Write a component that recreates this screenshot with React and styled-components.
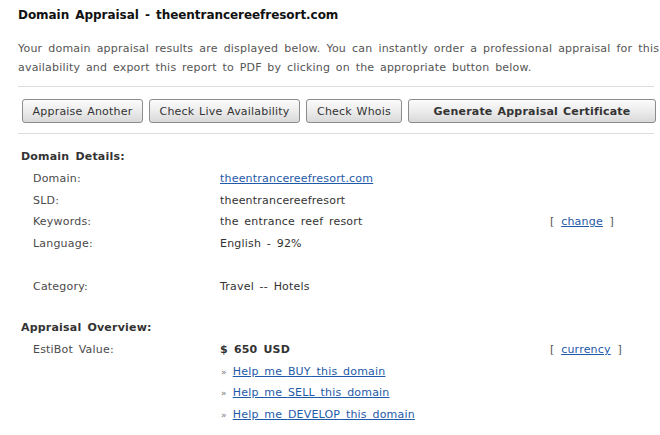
import React from 'react'
import styled, { createGlobalStyle } from 'styled-components'

const Global = createGlobalStyle`
  html, body {
    margin: 0;
    padding: 0;
    background: #fff;
  }
  body {
    width: 660px;
    overflow: hidden;
    font-family: "DejaVu Sans", Verdana, sans-serif;
    font-size: 11px;
    letter-spacing: 0.2px;
    word-spacing: 2px;
    color: #4a4a4a;
  }
`

const Page = styled.div`
  padding: 8px 0 0 18px;
  width: 642px;
`

const Title = styled.h1`
  margin: 0;
  font-size: 12px;
  line-height: 15px;
  font-weight: bold;
  letter-spacing: -0.05px;
  color: #111;
`

const Intro = styled.p`
  margin: 16px 0 0;
  line-height: 19px;
  color: #555;
  white-space: nowrap;
`

const IntroLine = styled.span`
  display: block;
  word-spacing: ${p => p.$ws || '2px'};
`

const Divider = styled.hr`
  border: 0;
  height: 1px;
  background: #dcdcdc;
  width: 636px;
  margin: ${p => p.$m};
`

const Toolbar = styled.div`
  display: flex;
  gap: 6px;
  padding-left: 4px;
`

const Button = styled.button`
  width: ${p => p.$w}px;
  height: 24px;
  padding: 0;
  border: 1px solid #8c8c8c;
  border-radius: 3px;
  background: linear-gradient(#fbfbfb 0%, #ececec 50%, #d9d9d9 100%);
  font-family: inherit;
  font-size: 11px;
  letter-spacing: 0.2px;
  word-spacing: 1px;
  font-weight: ${p => (p.$bold ? 'bold' : 'normal')};
  color: #333;
  cursor: pointer;
`

const Section = styled.div`
  padding-left: 3px;
  margin-top: ${p => p.$top}px;
`

const Heading = styled.div`
  font-weight: bold;
  line-height: 22px;
  color: #333;
`

const Grid = styled.div`
  display: grid;
  grid-template-columns: 187px 330px auto;
  padding-left: 12px;
  grid-auto-rows: 21.5px;
  align-items: center;
`

const Label = styled.div`
  grid-column: 1;
  color: #4a4a4a;
`

const Value = styled.div`
  grid-column: 2;
  color: #333;
  font-weight: ${p => (p.$bold ? 'bold' : 'normal')};
`

const Extra = styled.div`
  grid-column: 3;
  color: #555;
  word-spacing: 3px;
`

const Spacer = styled.div`
  grid-column: 1 / -1;
`

const Link = styled.a`
  color: #1e5aa8;
  text-decoration: underline;
  cursor: pointer;
`

const Bullet = styled.span`
  color: #777;
  font-size: 9px;
  margin: 0 6px 0 1px;
  word-spacing: 0;
`

const rows = [
  ['Domain:', <Link>theentrancereefresort.com</Link>],
  ['SLD:', 'theentrancereefresort'],
  ['Keywords:', 'the entrance reef resort', 'change'],
  ['Language:', 'English - 92%'],
  null,
  ['Category:', 'Travel -- Hotels'],
]

const helps = ['BUY', 'SELL', 'DEVELOP']

export default function App() {
  return (
    <>
      <Global />
      <Page>
        <Title>Domain Appraisal - theentrancereefresort.com</Title>
        <Intro>
          <IntroLine $ws="2.3px">
            Your domain appraisal results are displayed below. You can instantly order a professional appraisal for this
          </IntroLine>
          <IntroLine>
            availability and export this report to PDF by clicking on the appropriate button below.
          </IntroLine>
        </Intro>
        <Divider $m="9px 0 12px" />
        <Toolbar>
          <Button $w={121}>Appraise Another</Button>
          <Button $w={151}>Check Live Availability</Button>
          <Button $w={96}>Check Whois</Button>
          <Button $w={248} $bold>Generate Appraisal Certificate</Button>
        </Toolbar>
        <Divider $m="10px 0 0" />

        <Section $top={12}>
          <Heading>Domain Details:</Heading>
          <Grid>
            {rows.map((r, i) =>
              r === null ? (
                <Spacer key={i} />
              ) : (
                <React.Fragment key={i}>
                  <Label>{r[0]}</Label>
                  <Value>{r[1]}</Value>
                  {r[2] && (
                    <Extra>
                      [ <Link>{r[2]}</Link> ]
                    </Extra>
                  )}
                </React.Fragment>
              )
            )}
          </Grid>
        </Section>

        <Section $top={20}>
          <Heading>Appraisal Overview:</Heading>
          <Grid>
            <Label>EstiBot Value:</Label>
            <Value $bold>$ 650 USD</Value>
            <Extra>
              [ <Link>currency</Link> ]
            </Extra>
            {helps.map(h => (
              <Value key={h}>
                <Bullet>»</Bullet>
                <Link>Help me {h} this domain</Link>
              </Value>
            ))}
          </Grid>
        </Section>
      </Page>
    </>
  )
}
